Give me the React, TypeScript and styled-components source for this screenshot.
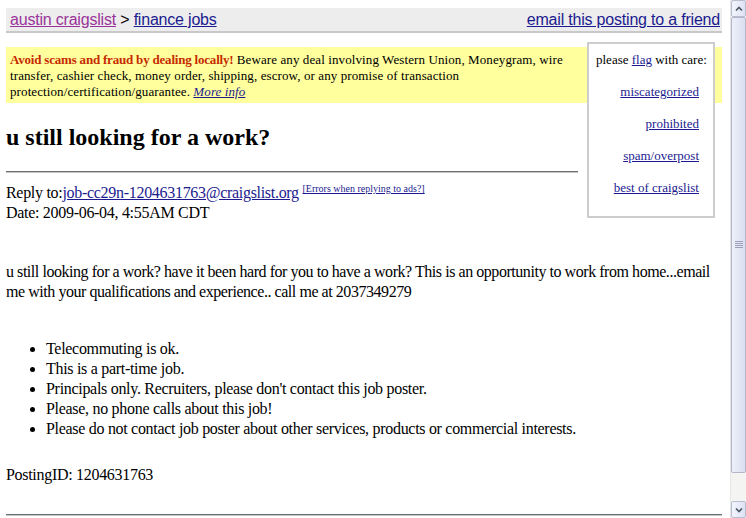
import * as React from "react";
import styled, { createGlobalStyle } from "styled-components";

const GlobalStyle = createGlobalStyle`
  html, body {
    margin: 0;
    padding: 0;
    background: #ffffff;
  }
  body {
    font-family: "Liberation Serif", "Times New Roman", serif;
    font-size: 16px;
    color: #000;
  }
`;

const Window = styled.div`
  display: flex;
  width: 746px;
  height: 518px;
  overflow: hidden;
  background: #fff;
`;

const Page = styled.div`
  flex: 1;
  min-width: 0;
  padding: 8px 8px 0 6px;
  line-height: 20px;
  letter-spacing: -0.3px;
`;

const Link = styled.a<{ $visited?: boolean }>`
  color: ${(p) => (p.$visited ? "#993399" : "#1b1b8f")};
  text-decoration: underline;
  cursor: pointer;
`;

const TopBar = styled.div`
  display: flex;
  justify-content: space-between;
  align-items: center;
  height: 25px;
  padding: 1px 2px 0 4px;
  box-sizing: border-box;
  background: #ededed;
  border-bottom: 2px solid #c9c9c9;
  font-family: "Liberation Sans", Arial, sans-serif;
  font-size: 16px;
  line-height: 22px;
  letter-spacing: -0.2px;
`;

const Crumbs = styled.span`
  white-space: nowrap;
`;

const Notice = styled.div`
  margin-top: 14px;
  padding: 5px 4px 3px;
  background: #ffff9e;
  font-size: 13px;
  line-height: 16px;
  letter-spacing: 0.1px;
`;

const Warning = styled.b`
  color: #c62a00;
  letter-spacing: -0.2px;
`;

const MoreInfo = styled(Link)`
  font-style: italic;
`;

const FlagBox = styled.div`
  float: right;
  width: 128px;
  box-sizing: border-box;
  margin: -10px 3px 0 9px;
  padding: 8px 0 4px;
  background: #fff;
  border: 2px solid #cdcdcd;
  font-size: 13px;
  line-height: 16px;
  letter-spacing: 0;
`;

const FlagTitle = styled.div`
  padding-left: 7px;
  margin-bottom: 16px;
  white-space: nowrap;
`;

const FlagItem = styled.div`
  text-align: right;
  padding-right: 14px;
  margin-bottom: 16px;
`;

const Title = styled.h2`
  margin: 20px 0 20px;
  font-family: "Liberation Serif", "Times New Roman", serif;
  font-size: 24px;
  line-height: 28px;
  font-weight: bold;
  letter-spacing: 0;
`;

const Rule = styled.hr<{ $top?: number }>`
  margin: ${(p) => p.$top ?? 0}px 0 0;
  height: 0;
  overflow: hidden;
  border: 0;
  border-top: 1px solid #6f6f6f;
  border-bottom: 1px solid #c4c4c4;
`;

const Meta = styled.div`
  margin-top: 10px;
`;

const Help = styled.sup`
  font-size: 10px;
  line-height: 10px;
  vertical-align: 6px;
  letter-spacing: 0;
`;

const Body = styled.div`
  margin-top: 39px;
  letter-spacing: -0.45px;
`;

const Bullets = styled.ul`
  margin: 37px 0 0;
  padding-left: 40px;
`;

const PostingId = styled.div`
  margin-top: 26px;
`;

const Scrollbar = styled.div`
  width: 16px;
  flex: none;
  display: flex;
  flex-direction: column;
  background: #f4f4f2;
  border-left: 1px solid #e6e6e6;
  box-sizing: border-box;
`;

const ArrowButton = styled.div`
  height: 17px;
  flex: none;
  display: flex;
  align-items: center;
  justify-content: center;
  box-sizing: border-box;
  border: 1px solid #b8bdcf;
  border-radius: 2px;
  background: linear-gradient(90deg, #f3f5fd, #dde2f3);
`;

const Thumb = styled.div`
  height: 456px;
  flex: none;
  display: flex;
  align-items: center;
  justify-content: center;
  box-sizing: border-box;
  border: 1px solid #b3b7c9;
  border-radius: 2px;
  background: linear-gradient(90deg, #eef0fa, #dadeef);
`;

const Track = styled.div`
  flex: 1;
`;

const rules = [
  "Telecommuting is ok.",
  "This is a part-time job.",
  "Principals only. Recruiters, please don't contact this job poster.",
  "Please, no phone calls about this job!",
  "Please do not contact job poster about other services, products or commercial interests.",
];

const flags = ["miscategorized", "prohibited", "spam/overpost", "best of craigslist"];

const Chevron: React.FC<{ up?: boolean }> = ({ up }) => (
  <svg width="8" height="6" viewBox="0 0 8 6">
    <path
      d={up ? "M1 4.5 L4 1.5 L7 4.5" : "M1 1.5 L4 4.5 L7 1.5"}
      fill="none"
      stroke="#4d5566"
      strokeWidth="1.6"
    />
  </svg>
);

const Grip = () => (
  <svg width="8" height="8" viewBox="0 0 8 8">
    {[0.5, 2.5, 4.5, 6.5].map((y) => (
      <line key={y} x1="0" x2="8" y1={y} y2={y} stroke="#9aa0b8" strokeWidth="1" />
    ))}
  </svg>
);

export default function App() {
  return (
    <>
      <GlobalStyle />
      <Window>
        <Page>
          <TopBar>
            <Crumbs>
              <Link $visited>austin craigslist</Link> &gt; <Link>finance jobs</Link>
            </Crumbs>
            <Link>email this posting to a friend</Link>
          </TopBar>

          <Notice>
            <FlagBox>
              <FlagTitle>
                please <Link>flag</Link> with care:
              </FlagTitle>
              {flags.map((f) => (
                <FlagItem key={f}>
                  <Link>{f}</Link>
                </FlagItem>
              ))}
            </FlagBox>
            <Warning>Avoid scams and fraud by dealing locally!</Warning> Beware any deal involving
            Western Union, Moneygram, wire transfer, cashier check, money order, shipping, escrow, or
            any promise of transaction protection/certification/guarantee.{" "}
            <MoreInfo>More info</MoreInfo>
          </Notice>

          <Title>u still looking for a work?</Title>
          <Rule />

          <Meta>
            Reply to:<Link>job-cc29n-1204631763@craigslist.org</Link>{" "}
            <Help>
              <Link>[Errors when replying to ads?]</Link>
            </Help>
            <br />
            Date: 2009-06-04, 4:55AM CDT
          </Meta>

          <Body>
            u still looking for a work? have it been hard for you to have a work? This is an
            opportunity to work from home...email me with your qualifications and experience.. call
            me at 2037349279
          </Body>

          <Bullets>
            {rules.map((r) => (
              <li key={r}>{r}</li>
            ))}
          </Bullets>

          <PostingId>PostingID: 1204631763</PostingId>
          <Rule $top={29} />
        </Page>

        <Scrollbar>
          <ArrowButton>
            <Chevron up />
          </ArrowButton>
          <Thumb>
            <Grip />
          </Thumb>
          <Track />
          <ArrowButton>
            <Chevron />
          </ArrowButton>
        </Scrollbar>
      </Window>
    </>
  );
}
